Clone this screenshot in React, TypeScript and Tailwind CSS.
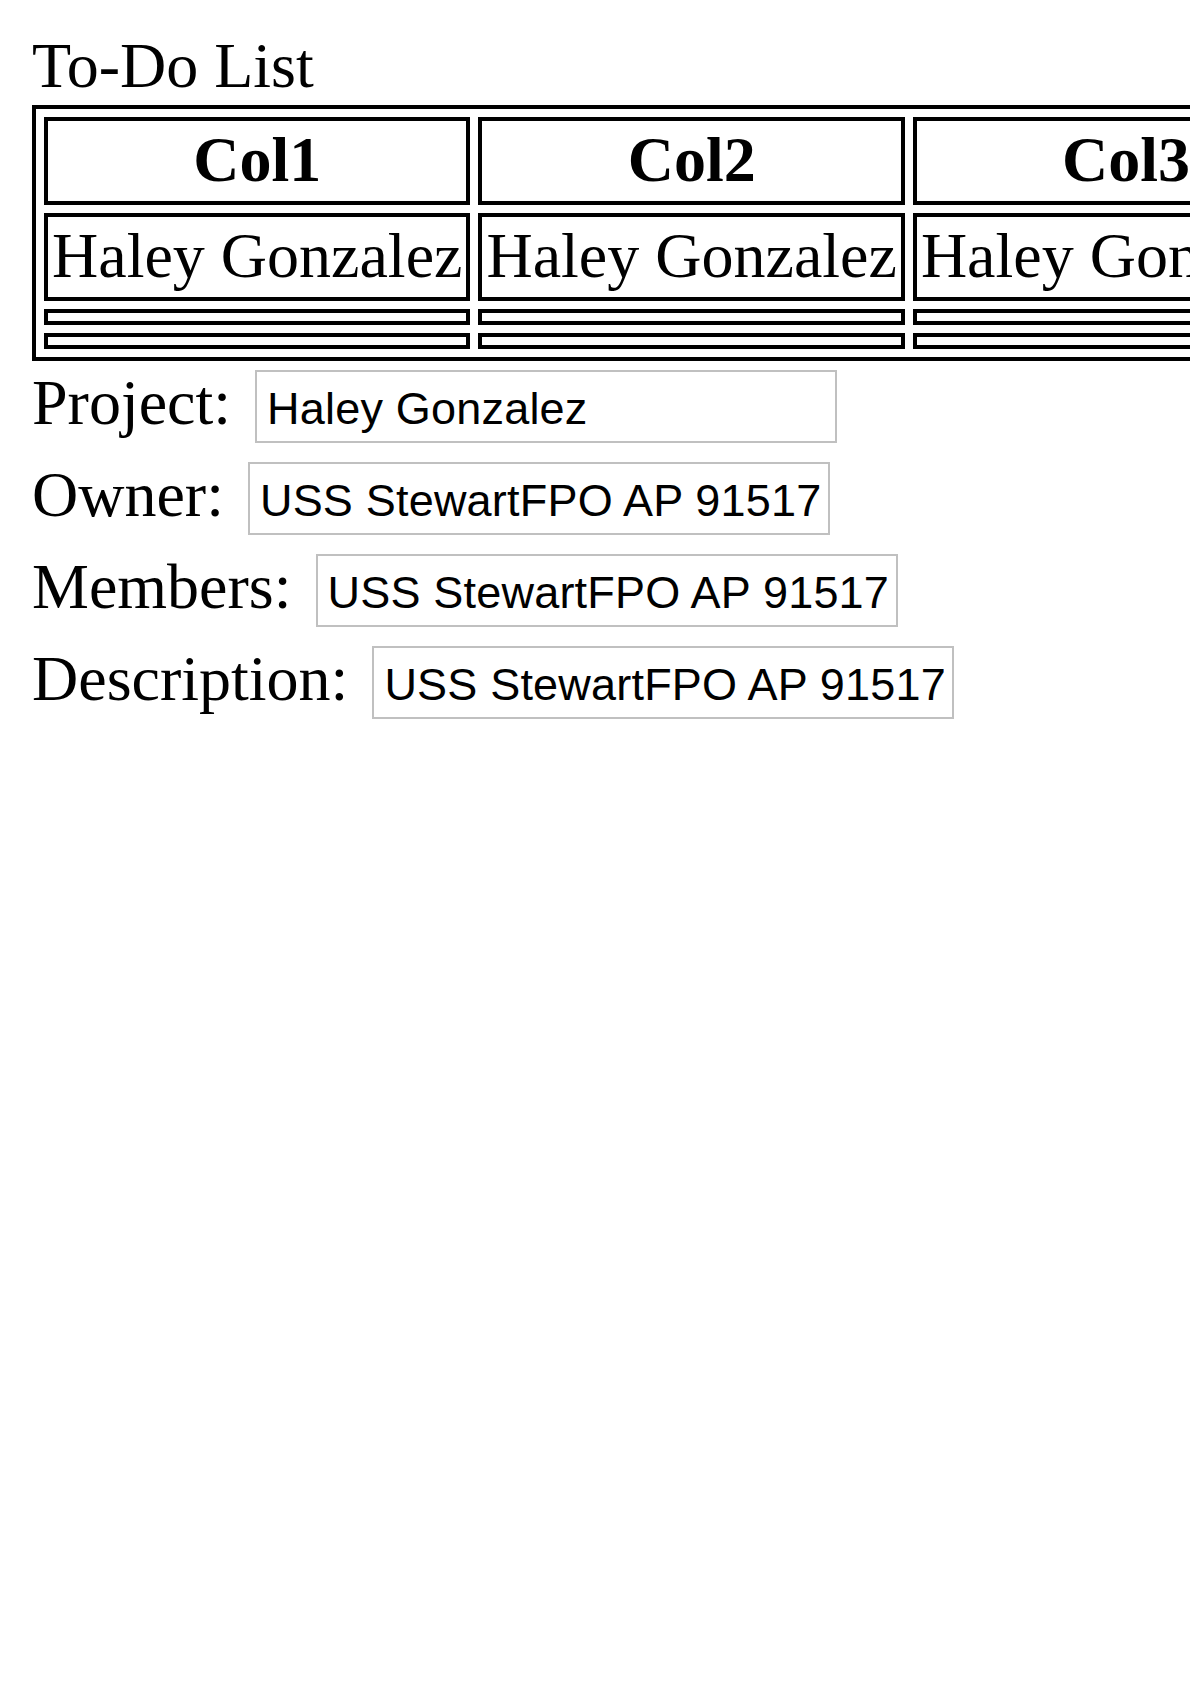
const serif = "font-['Liberation_Serif','Times_New_Roman',serif]";

const columns = ['Col1', 'Col2', 'Col3'];
const names = ['Haley Gonzalez', 'Haley Gonzalez', 'Haley Gonzalez'];

const fields = [
  { label: 'Project:', value: 'Haley Gonzalez' },
  { label: 'Owner:', value: 'USS StewartFPO AP 91517' },
  { label: 'Members:', value: 'USS StewartFPO AP 91517' },
  { label: 'Description:', value: 'USS StewartFPO AP 91517' },
];

export default function App() {
  return (
    <div className={`w-full min-h-[1684px] overflow-hidden bg-white text-black ${serif}`}>
      <div className="px-8 pt-[26px]">
        {/* Title */}
        <div className="text-[64px] leading-[79px]">To-Do List</div>

        {/* Table */}
        <table className="border-[4px] border-solid border-black border-separate border-spacing-[8px]">
          <thead>
            <tr>
              {columns.map((c) => (
                <th
                  key={c}
                  className="border-[4px] border-solid border-black px-[4px] pt-[4px] pb-[6px] text-center text-[64px] leading-[70px] font-bold whitespace-nowrap"
                >
                  {c}
                </th>
              ))}
            </tr>
          </thead>
          <tbody>
            <tr>
              {names.map((n, i) => (
                <td
                  key={i}
                  className="border-[4px] border-solid border-black px-[4px] pt-[4px] pb-[6px] text-[64px] leading-[70px] whitespace-nowrap"
                >
                  {n}
                </td>
              ))}
            </tr>
            <tr>
              {columns.map((c) => (
                <td key={c} className="border-[4px] border-solid border-black p-[4px]"></td>
              ))}
            </tr>
            <tr>
              {columns.map((c) => (
                <td key={c} className="border-[4px] border-solid border-black p-[4px]"></td>
              ))}
            </tr>
          </tbody>
        </table>

        {/* Form fields */}
        <div className="mt-[9px] flex flex-col gap-[19px]">
          {fields.map((f) => (
            <div key={f.label} className="flex items-baseline gap-6">
              <span className="text-[64px] leading-[64px]">{f.label}</span>
              <input
                type="text"
                readOnly
                value={f.value}
                className="h-[73px] w-[582px] border-[2px] border-solid border-[#c0c0c0] bg-white pl-[10px] pr-[8px] pt-[5px] text-[45px] tracking-[0.2px] text-black font-['Liberation_Sans',Arial,sans-serif] outline-none"
              />
            </div>
          ))}
        </div>
      </div>
    </div>
  );
}
